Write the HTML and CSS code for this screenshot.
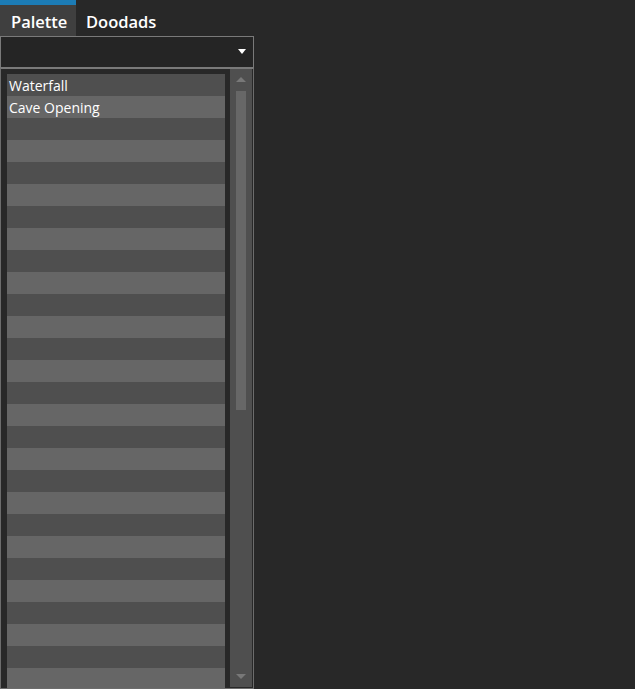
FILE: index.html
```html
<!doctype html>
<html lang="en">
  <head>
    <meta charset="UTF-8" />
    <title>Palette</title>
    <link rel="stylesheet" href="styles.css">
  </head>
  <body>
    <div class="tabs">
      <div class="tab active">Palette</div>
      <div class="tab">Doodads</div>
    </div>

    <div class="panel">
      <div class="combo">
        <span class="combo-arrow"></span>
      </div>

      <div class="listbox">
        <div class="items">
          <div class="item">Waterfall</div>
          <div class="item">Cave Opening</div>
          <div class="item"></div>
          <div class="item"></div>
          <div class="item"></div>
          <div class="item"></div>
          <div class="item"></div>
          <div class="item"></div>
          <div class="item"></div>
          <div class="item"></div>
          <div class="item"></div>
          <div class="item"></div>
          <div class="item"></div>
          <div class="item"></div>
          <div class="item"></div>
          <div class="item"></div>
          <div class="item"></div>
          <div class="item"></div>
          <div class="item"></div>
          <div class="item"></div>
          <div class="item"></div>
          <div class="item"></div>
          <div class="item"></div>
          <div class="item"></div>
          <div class="item"></div>
          <div class="item"></div>
          <div class="item"></div>
          <div class="item"></div>
        </div>
        <div class="scrollbar">
          <span class="scroll-up"></span>
          <div class="scroll-track">
            <div class="scroll-thumb"></div>
          </div>
          <span class="scroll-down"></span>
        </div>
      </div>
    </div>
  </body>
</html>
```

FILE: styles.css
```css
body {
  margin: 0;
  background: #282828;
  color: #ffffff;
  font-family: "Open Sans", "Noto Sans", sans-serif;
  height: 689px;
  overflow: hidden;
}

/* Tabs */
.tabs {
  display: flex;
  height: 36px;
}

.tab {
  box-sizing: border-box;
  height: 36px;
  padding: 6px 10px 0 10px;
  font-size: 16.5px;
  font-weight: 600;
  border-top: 5px solid transparent;
  line-height: 22px;
}

.tab.active {
  width: 76px;
  background: #3f3f3f;
  border-top-color: #1c7cb6;
  padding-left: 11px;
}

/* Panel */
.panel {
  width: 254px;
}

.combo {
  box-sizing: border-box;
  height: 32px;
  border: 1px solid #7a7a7a;
  background: #252525;
  position: relative;
}

.combo-arrow {
  position: absolute;
  right: 7px;
  top: 12px;
  width: 0;
  height: 0;
  border-left: 4px solid transparent;
  border-right: 4px solid transparent;
  border-top: 5px solid #ffffff;
}

.listbox {
  box-sizing: border-box;
  height: 621px;
  border: 1px solid #6c6c6c;
  border-top-color: #7a7a7a;
  background: #282828;
  display: flex;
  gap: 5px;
  padding: 0 1px 1px 6px;
  overflow: hidden;
}

.items {
  width: 218px;
  flex: none;
  margin-top: 5px;
}

.item {
  height: 22px;
  line-height: 23px;
  padding-left: 2px;
  font-size: 14px;
  background: #4f4f4f;
}

.item:nth-child(even) {
  background: #666666;
}

/* Scrollbar */
.scrollbar {
  flex: 1;
  background: #4f4f4f;
  display: flex;
  flex-direction: column;
  align-items: center;
  padding: 8px 0 5px;
}

.scroll-up,
.scroll-down {
  width: 0;
  height: 0;
  border-left: 5px solid transparent;
  border-right: 5px solid transparent;
}

.scroll-up {
  border-bottom: 5px solid #787878;
  margin-bottom: 9px;
}

.scroll-down {
  border-top: 5px solid #787878;
  margin-bottom: 3px;
}

.scroll-track {
  flex: 1;
  width: 10px;
}

.scroll-thumb {
  height: 319px;
  background: #676767;
}
```
